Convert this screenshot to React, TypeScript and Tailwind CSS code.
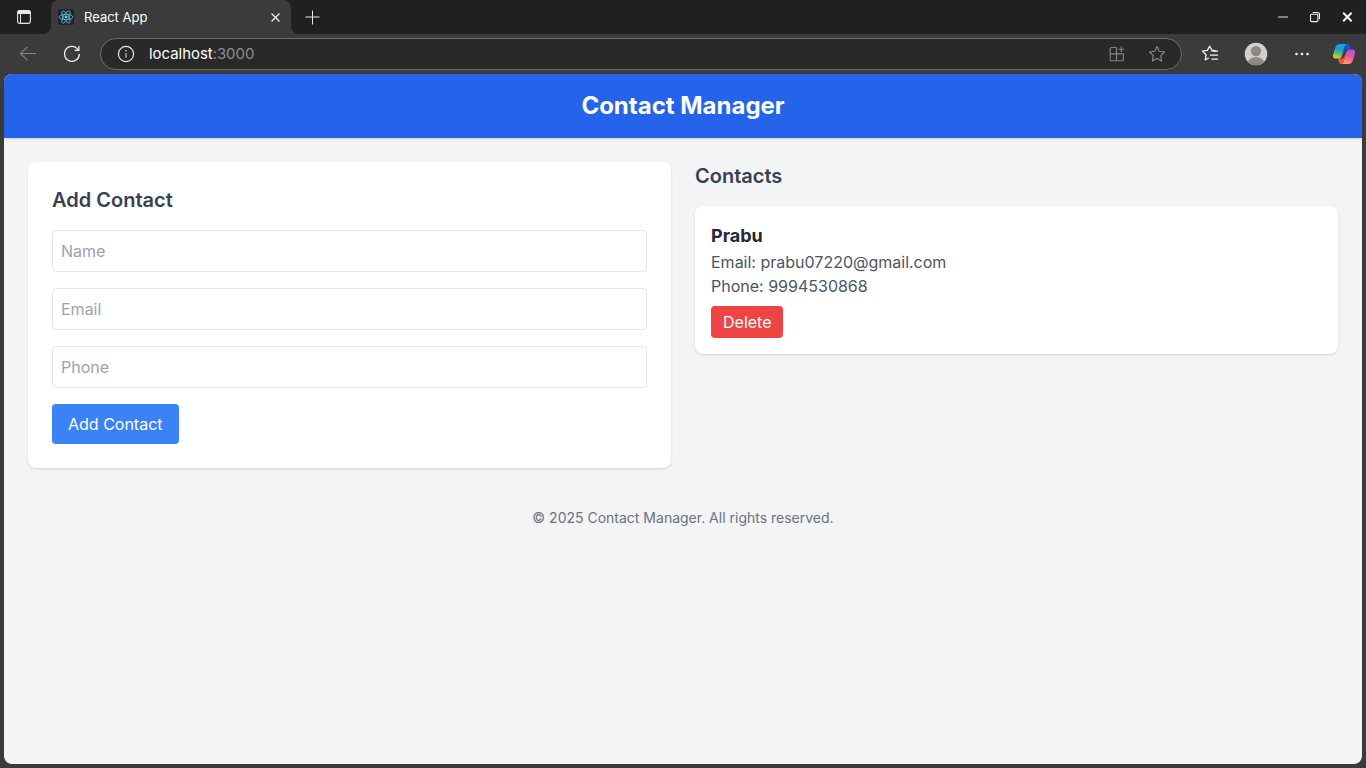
import React from 'react';

function TabActionsIcon() {
  return (
    <svg className="size-4" viewBox="0 0 16 16" fill="none">
      <rect x="1.6" y="1.6" width="12.8" height="12.8" rx="2.4" stroke="#e6e6e6" strokeWidth="1.1" />
      <path d="M1.1 5V4A2.9 2.9 0 0 1 4 1.100h8A2.900 2.900 0 0 1 14.900 4v1z" fill="#e6e6e6" />
      <path d="M4.500 5v9.400" stroke="#e6e6e6" />
    </svg>
  );
}

function ReactLogo() {
  return (
    <svg className="size-4" viewBox="0 0 16 16" fill="none">
      <rect width="16" height="16" rx="2" fill="#20232a" />
      <g stroke="#61c9e4" strokeWidth=".75">
        <ellipse cx="8" cy="8" rx="6.9" ry="2.7" />
        <ellipse cx="8" cy="8" rx="6.9" ry="2.7" transform="rotate(60 8 8)" />
        <ellipse cx="8" cy="8" rx="6.9" ry="2.7" transform="rotate(120 8 8)" />
      </g>
      <circle cx="8" cy="8" r="1.4" fill="#61dafb" />
    </svg>
  );
}

function TabStrip() {
  return (
    <div className="flex h-[34px] items-stretch bg-[#202020]">
      <div className="flex w-[51px] items-center pl-4">
        <TabActionsIcon />
      </div>
      <div className="relative flex w-60 items-center rounded-t-lg bg-[#3b3b3b] pl-[7px] pr-2.5">
        <svg className="absolute bottom-0 -left-2 size-2" viewBox="0 0 8 8">
          <path d="M8 0v8H0a8 8 0 0 0 8-8z" fill="#3b3b3b" />
        </svg>
        <svg className="absolute bottom-0 -right-2 size-2" viewBox="0 0 8 8">
          <path d="M0 0v8h8a8 8 0 0 1-8-8z" fill="#3b3b3b" />
        </svg>
        <ReactLogo />
        <span className="ml-2.5 flex-1 text-[13px] leading-5 text-white">React App</span>
        <svg className="size-[11px]" viewBox="0 0 11 11">
          <path d="M1.5 1.5l8 8m0-8l-8 8" stroke="#f2f2f2" strokeWidth="1.2" />
        </svg>
      </div>
      <div className="flex flex-1 items-center pl-3.5">
        <svg className="size-4" viewBox="0 0 16 16">
          <path d="M7.5 1v14M.5 7.5h14" stroke="#e6e6e6" strokeWidth="1" transform="translate(0 .5)" />
        </svg>
      </div>
      <div className="flex items-center gap-4 pr-[11px]">
        <svg className="size-4" viewBox="0 0 16 16">
          <path d="M3 8h10" stroke="#9a9a9a" strokeWidth="1.600" />
        </svg>
        <svg className="size-4" viewBox="0 0 16 16" fill="none" stroke="#f0f0f0" strokeWidth="1.1">
          <rect x="3.5" y="5.2" width="7.4" height="7.4" rx="1.2" />
          <path d="M5.7 3.5h4.6a2.2 2.2 0 0 1 2.2 2.2v4.6" />
        </svg>
        <svg className="size-4" viewBox="0 0 16 16">
          <path d="M4.200 3.800l8.400 8.400m0-8.400l-8.400 8.400" stroke="#f5f5f5" strokeWidth="2" />
        </svg>
      </div>
    </div>
  );
}

function CopilotLogo() {
  return (
    <svg className="h-[22px] w-6" viewBox="0 0 24 22">
      <defs>
        <linearGradient id="cool" x1=".6" y1="0" x2=".3" y2="1">
          <stop offset="0" stopColor="#18a0ea" />
          <stop offset=".35" stopColor="#199bdc" />
          <stop offset=".65" stopColor="#4fbf77" />
          <stop offset="1" stopColor="#f2cf14" />
        </linearGradient>
        <linearGradient id="warm" x1=".7" y1="0" x2=".3" y2="1">
          <stop offset="0" stopColor="#a653ec" />
          <stop offset=".45" stopColor="#e8559c" />
          <stop offset="1" stopColor="#ffa45c" />
        </linearGradient>
      </defs>
      <path d="M13 1h2.2c1.5 0 2.2.8 2.6 2.1l1 3.2h-3.1c-2 0-3.1.9-3.7 2.7L10 12z" fill="#1b50d8" />
      <path d="M11 21H9.500c-1.500 0-2.300-.8-2.700-2.100L6 15.600h2.700c2 0 3.100-.9 3.700-2.700L14 9.500z" fill="#ee5545" />
      <path d="M7.700 1H15c-1.400 0-2 1-2.400 2.300L9.900 12.700c-.5 1.800-1.500 2.900-3.400 2.900H3.700C1.300 15.600.600 13.700 1.100 11.500L3.500 4C4.200 2 5.500 1 7.700 1z" fill="url(#cool)" />
      <path d="M16.500 21H9.200c1.400 0 2-1 2.400-2.300l2.700-9.400c.5-1.800 1.500-2.900 3.400-2.900h2.800c2.400 0 3 1.900 2.500 4.100L20.700 18c-.7 2-2 3-4.200 3z" fill="url(#warm)" />
    </svg>
  );
}

const starPath = 'M9 1.500l2.300 4.800 5.200.7-3.800 3.700.9 5.300L9 13.500 4.400 16l.9-5.300L1.500 7l5.200-.7z';

function Toolbar() {
  return (
    <div className="flex h-10 items-center bg-[#3b3b3b]">
      <div className="flex w-[100px] items-center gap-6 pl-[18px]">
        <svg className="size-5" viewBox="0 0 20 20" fill="none" stroke="#858585" strokeWidth="1.1">
          <path d="M18 9.500H2.500M9.500 2.800L2.500 9.500l7 6.800" />
        </svg>
        <svg className="size-5" viewBox="0 0 20 20" fill="none" stroke="#f2f2f2" strokeWidth="1.250">
          <path d="M17.400 9.900A7.500 7.500 0 1 1 15.200 4.600L16.600 6" />
          <path d="M16.900 2v4.300h-4.300" />
        </svg>
      </div>
      <div className="flex h-8 w-[1082px] items-center rounded-full border border-[#6c6c6c] bg-[#292929] pr-[15px] pl-4">
        <svg className="size-[18px]" viewBox="0 0 18 18" fill="none">
          <circle cx="9" cy="9" r="7.600" stroke="#e8e8e8" strokeWidth="1.200" />
          <path d="M9 8v4.700" stroke="#b8b8b8" strokeWidth="1.300" />
          <circle cx="9" cy="5.700" r=".85" fill="#b8b8b8" />
        </svg>
        <div className="ml-3.5 flex-1 text-[14.9px] leading-5 text-white">
          localhost<span className="text-[#8c8c8c]">:3000</span>
        </div>
        <svg className="mr-[22px] size-[18px]" viewBox="0 0 18 18" fill="none" stroke="#858585" strokeWidth="1.100">
          <path d="M8.500 2.500H3.200a1 1 0 0 0-1 1v11.300a1 1 0 0 0 1 1h11.200a1 1 0 0 0 1-1V9.500a.6.600 0 0 0-.6-.6H2.200M8.500 2.500v13.300M13.200 1.500v5.600M10.400 4.300H16" />
        </svg>
        <svg className="size-[18px]" viewBox="0 0 18 18" fill="none" stroke="#8c8c8c" strokeWidth="1.100" strokeLinejoin="round">
          <path d={starPath} />
        </svg>
      </div>
      <div className="flex flex-1 items-center pl-[18px]">
        <svg className="size-5" viewBox="0 0 20 20" fill="none" stroke="#f2f2f2" strokeWidth="1.250" strokeLinejoin="round">
          <path d="M16.200 6.800l-4.300-.6L9.700 2.100 7.400 6.400l-5 .7 3.700 3.600-.9 5.200 3.600-1.900" />
          <path d="M11.500 7.500H18M10 11.500h8M11.500 15.500H18" transform="translate(0 -.5)" />
        </svg>
        <svg className="ml-6 size-6" viewBox="0 0 24 24">
          <defs>
            <clipPath id="avatar">
              <circle cx="12" cy="12" r="11.300" />
            </clipPath>
          </defs>
          <g clipPath="url(#avatar)">
            <rect width="24" height="24" fill="#d2d0ce" />
            <circle cx="12" cy="9.100" r="5.200" fill="#8b8885" />
            <ellipse cx="12" cy="22" rx="8.500" ry="6.900" fill="#8b8885" />
          </g>
        </svg>
        <svg className="ml-[26px] size-4" viewBox="0 0 16 16" fill="#f2f2f2">
          <circle cx="2.500" cy="8" r="1.350" />
          <circle cx="8" cy="8" r="1.350" />
          <circle cx="13.500" cy="8" r="1.350" />
        </svg>
        <div className="ml-[22px]">
          <CopilotLogo />
        </div>
      </div>
    </div>
  );
}

function AddContactForm() {
  return (
    <form className="rounded-lg bg-white p-6 shadow-[0_1px_3px_0_rgb(0_0_0/0.1),0_1px_2px_-1px_rgb(0_0_0/0.1)]">
      <h2 className="mb-4 text-xl font-semibold text-[#374151]">Add Contact</h2>
      {['Name', 'Email', 'Phone'].map((label) => (
        <input
          key={label}
          placeholder={label}
          className="mb-4 block w-full rounded border border-[#e5e7eb] p-2 placeholder:text-[#9ca3af]"
        />
      ))}
      <button type="button" className="block rounded bg-[#3b82f6] px-4 py-2 text-white">
        Add Contact
      </button>
    </form>
  );
}

function ContactList() {
  return (
    <section>
      <h2 className="mb-4 text-xl font-semibold text-[#374151]">Contacts</h2>
      <div className="rounded-lg bg-white p-4 shadow-[0_1px_3px_0_rgb(0_0_0/0.1),0_1px_2px_-1px_rgb(0_0_0/0.1)]">
        <h3 className="text-lg font-bold text-[#1f2937]">Prabu</h3>
        <p className="text-[#4b5563]">Email: prabu07220@gmail.com</p>
        <p className="text-[#4b5563]">Phone: 9994530868</p>
        <button type="button" className="mt-2 block rounded bg-[#ef4444] px-3 py-1 text-white">
          Delete
        </button>
      </div>
    </section>
  );
}

export default function App() {
  return (
    <div className="flex h-screen flex-col overflow-hidden bg-[#3b3b3b] font-['Inter',sans-serif]">
      <TabStrip />
      <Toolbar />
      <div className="mx-1 mb-1 flex-1 overflow-hidden rounded-lg bg-[#f3f4f6]">
        <header className="bg-[#2563eb] p-4 text-center text-white shadow-[0_1px_3px_0_rgb(0_0_0/0.1),0_1px_2px_-1px_rgb(0_0_0/0.1)]">
          <h1 className="text-2xl font-bold">Contact Manager</h1>
        </header>
        <main className="grid grid-cols-2 items-start gap-6 p-6">
          <AddContactForm />
          <ContactList />
        </main>
        <footer className="p-4 text-center text-sm text-[#6b7280]">
          © 2025 Contact Manager. All rights reserved.
        </footer>
      </div>
    </div>
  );
}
